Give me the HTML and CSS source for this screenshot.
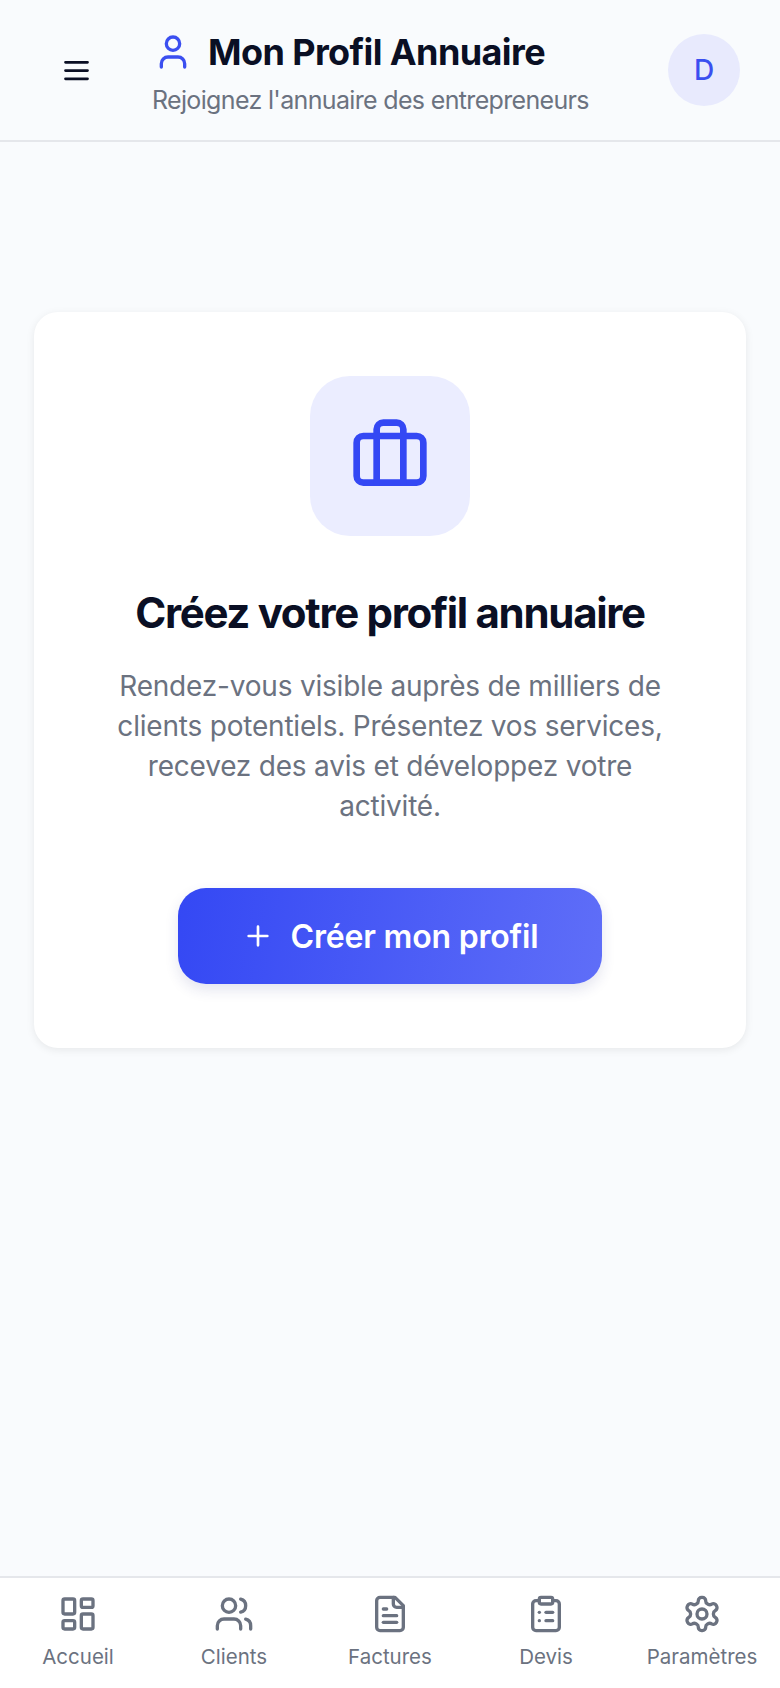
FILE: index.html
```html
<!DOCTYPE html>
<html lang="fr">
<head>
    <meta charset="UTF-8">
    <meta name="viewport" content="width=device-width, initial-scale=1.0">
    <title>Mon Profil Annuaire</title>
    <link rel="stylesheet" href="styles.css">
</head>
<body>

<div class="page">
    <header class="topbar">
        <button class="menu-btn">
            <svg class="icon-menu" viewBox="0 0 24 24"><path d="M4 6h16M4 12h16M4 18h16"/></svg>
        </button>
        <div class="topbar-text">
            <div class="topbar-title">
                <svg class="icon-user" viewBox="0 0 24 24"><path d="M19 21v-2a4 4 0 0 0-4-4H9a4 4 0 0 0-4 4v2"/><circle cx="12" cy="7" r="4"/></svg>
                <h1>Mon Profil Annuaire</h1>
            </div>
            <p class="topbar-sub">Rejoignez l'annuaire des entrepreneurs</p>
        </div>
        <div class="avatar">D</div>
    </header>

    <main class="content">
        <section class="card">
            <div class="card-icon">
                <svg viewBox="0 0 24 24"><rect x="2" y="6" width="20" height="14" rx="2"/><path d="M16 20V4a2 2 0 0 0-2-2h-4a2 2 0 0 0-2 2v16"/></svg>
            </div>
            <h2>Créez votre profil annuaire</h2>
            <p>Rendez-vous visible auprès de milliers de clients potentiels. Présentez vos services, recevez des avis et développez votre activité.</p>
            <button class="btn">
                <svg viewBox="0 0 24 24"><path d="M5 12h14M12 5v14"/></svg>
                Créer mon profil
            </button>
        </section>
    </main>

    <nav class="bottom-nav">
        <a class="nav-item">
            <svg viewBox="0 0 24 24"><rect x="3" y="3" width="7" height="9" rx="1"/><rect x="14" y="3" width="7" height="5" rx="1"/><rect x="14" y="12" width="7" height="9" rx="1"/><rect x="3" y="16" width="7" height="5" rx="1"/></svg>
            <span>Accueil</span>
        </a>
        <a class="nav-item">
            <svg viewBox="0 0 24 24"><path d="M16 21v-2a4 4 0 0 0-4-4H6a4 4 0 0 0-4 4v2"/><circle cx="9" cy="7" r="4"/><path d="M22 21v-2a4 4 0 0 0-3-3.87"/><path d="M16 3.13a4 4 0 0 1 0 7.75"/></svg>
            <span>Clients</span>
        </a>
        <a class="nav-item">
            <svg viewBox="0 0 24 24"><path d="M15 2H6a2 2 0 0 0-2 2v16a2 2 0 0 0 2 2h12a2 2 0 0 0 2-2V7Z"/><path d="M14 2v4a2 2 0 0 0 2 2h4"/><path d="M10 9H8"/><path d="M16 13H8"/><path d="M16 17H8"/></svg>
            <span>Factures</span>
        </a>
        <a class="nav-item">
            <svg viewBox="0 0 24 24"><rect x="8" y="2" width="8" height="4" rx="1"/><path d="M16 4h2a2 2 0 0 1 2 2v14a2 2 0 0 1-2 2H6a2 2 0 0 1-2-2V6a2 2 0 0 1 2-2h2"/><path d="M12 11h4"/><path d="M12 16h4"/><path d="M8 11h.01"/><path d="M8 16h.01"/></svg>
            <span>Devis</span>
        </a>
        <a class="nav-item">
            <svg viewBox="0 0 24 24"><path d="M12.22 2h-.44a2 2 0 0 0-2 2v.18a2 2 0 0 1-1 1.73l-.43.25a2 2 0 0 1-2 0l-.15-.08a2 2 0 0 0-2.73.73l-.22.38a2 2 0 0 0 .73 2.73l.15.1a2 2 0 0 1 1 1.72v.51a2 2 0 0 1-1 1.74l-.15.09a2 2 0 0 0-.73 2.73l.22.38a2 2 0 0 0 2.73.73l.15-.08a2 2 0 0 1 2 0l.43.25a2 2 0 0 1 1 1.73V20a2 2 0 0 0 2 2h.44a2 2 0 0 0 2-2v-.18a2 2 0 0 1 1-1.73l.43-.25a2 2 0 0 1 2 0l.15.08a2 2 0 0 0 2.73-.73l.22-.39a2 2 0 0 0-.73-2.73l-.15-.08a2 2 0 0 1-1-1.74v-.5a2 2 0 0 1 1-1.74l.15-.09a2 2 0 0 0 .73-2.73l-.22-.38a2 2 0 0 0-2.73-.73l-.15.08a2 2 0 0 1-2 0l-.43-.25a2 2 0 0 1-1-1.73V4a2 2 0 0 0-2-2z"/><circle cx="12" cy="12" r="3"/></svg>
            <span>Paramètres</span>
        </a>
    </nav>
</div>

</body>
</html>
```

FILE: styles.css
```css
* {
    box-sizing: border-box;
}
body {
    font-family: Inter, "Liberation Sans", sans-serif;
    background-color: #f9fbfd;
    margin: 0;
    padding: 0;
}
svg {
    fill: none;
    stroke: currentColor;
    stroke-width: 2;
    stroke-linecap: round;
    stroke-linejoin: round;
    display: block;
}
.page {
    height: 1688px;
    display: flex;
    flex-direction: column;
}
.topbar {
    height: 142px;
    flex-shrink: 0;
    display: flex;
    align-items: center;
    padding: 0 40px 0 60px;
    border-bottom: 2px solid #e5e7eb;
}
.menu-btn {
    background: none;
    border: none;
    padding: 0;
    color: #0a0f24;
    width: 33px;
    margin-right: 59px;
}
.icon-menu {
    width: 33px;
    height: 33px;
}
.topbar-text {
    flex: 1;
    margin-top: 5px;
}
.topbar-title {
    display: flex;
    align-items: center;
    padding-left: 1px;
    gap: 15px;
    height: 46px;
}
.icon-user {
    width: 40px;
    height: 40px;
    color: #3b4ff0;
}
.topbar-title h1 {
    margin: 0;
    font-size: 36px;
    font-weight: 700;
    letter-spacing: -0.6px;
    color: #0a0f24;
}
.topbar-sub {
    margin: 9px 0 0;
    font-size: 25px;
    line-height: 32px;
    letter-spacing: -0.66px;
    color: #6b7280;
}
.avatar {
    width: 72px;
    height: 72px;
    border-radius: 50%;
    background-color: #e8eafd;
    color: #3b4ff0;
    font-size: 28px;
    font-weight: 500;
    display: flex;
    align-items: center;
    justify-content: center;
}
.content {
    flex: 1;
    padding: 170px 34px 0;
}
.card {
    background-color: white;
    border-radius: 24px;
    padding: 64px 72px;
    box-shadow: 0 2px 8px rgba(0, 0, 0, 0.08);
    display: flex;
    flex-direction: column;
    align-items: center;
    text-align: center;
}
.card-icon {
    width: 160px;
    height: 160px;
    border-radius: 40px;
    background-color: #ebedff;
    color: #3448f4;
    display: flex;
    align-items: center;
    justify-content: center;
}
.card-icon svg {
    width: 80px;
    height: 80px;
}
.card h2 {
    margin: 51px 0 0;
    font-size: 42px;
    line-height: 52px;
    font-weight: 700;
    letter-spacing: -1.3px;
    white-space: nowrap;
    color: #0a0f24;
}
.card p {
    margin: 27px 0 0;
    font-size: 28px;
    line-height: 40px;
    letter-spacing: -0.2px;
    color: #6b7280;
}
.btn {
    margin-top: 62px;
    width: 424px;
    height: 96px;
    flex-shrink: 0;
    border: none;
    border-radius: 28px;
    background: linear-gradient(100deg, #3448f4, #5f6ef8);
    box-shadow: 0 6px 14px rgba(30, 40, 120, 0.12);
    color: white;
    font-family: inherit;
    font-size: 32px;
    font-weight: 600;
    letter-spacing: -0.2px;
    display: flex;
    align-items: center;
    justify-content: center;
    gap: 17px;
    cursor: pointer;
}
.btn svg {
    width: 32px;
    height: 32px;
}
.bottom-nav {
    height: 112px;
    flex-shrink: 0;
    background-color: white;
    border-top: 2px solid #e5e7eb;
    display: grid;
    grid-template-columns: repeat(5, 1fr);
}
.nav-item {
    display: flex;
    flex-direction: column;
    align-items: center;
    padding-top: 16px;
    gap: 9px;
    color: #6b7280;
    font-size: 20.5px;
    line-height: 28px;
}
.nav-item svg {
    width: 40px;
    height: 40px;
}
```
